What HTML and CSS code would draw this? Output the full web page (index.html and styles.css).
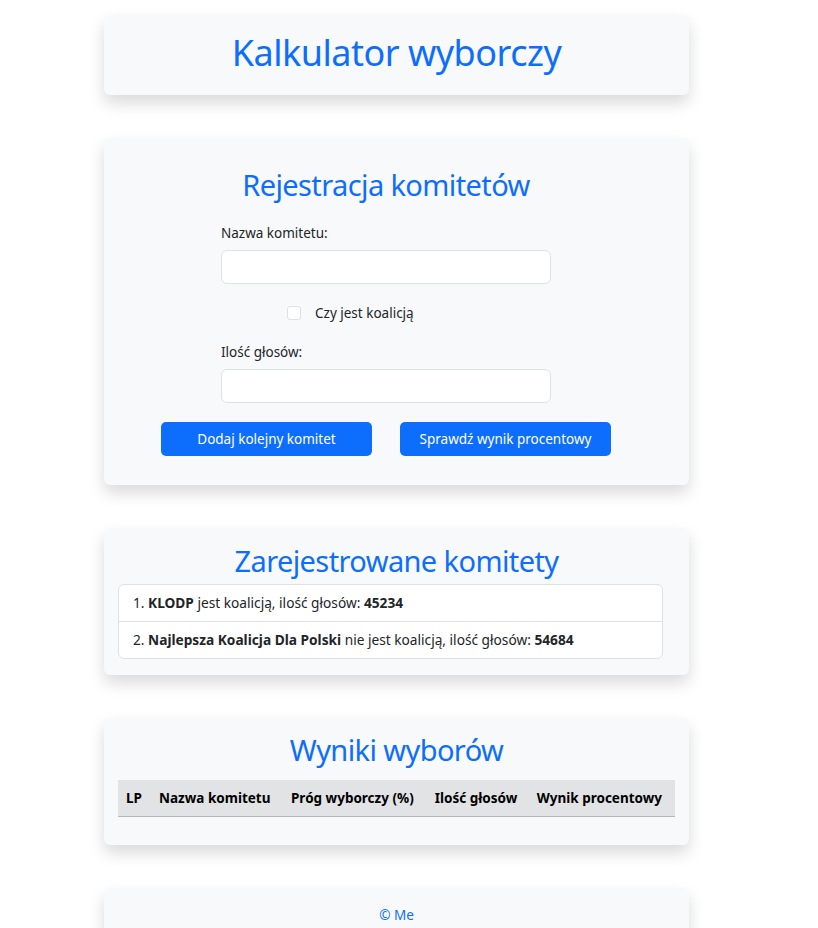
FILE: index.html
```html
<!DOCTYPE html>
<html lang="pl">
<head>
<meta charset="utf-8">
<title>Kalkulator wyborczy</title>
<link rel="stylesheet" href="styles.css">
</head>
<body>
<div class="page">
  <header class="card card-header">
    <h1 class="title-xl">Kalkulator wyborczy</h1>
  </header>

  <section class="card card-form">
    <h2 class="title">Rejestracja komitetów</h2>
    <div class="form">
      <label class="label" for="nazwa">Nazwa komitetu:</label>
      <input class="input" id="nazwa" type="text">
      <div class="check-row">
        <span class="checkbox"></span>
        <span class="check-label">Czy jest koalicją</span>
      </div>
      <label class="label" for="glosy">Ilość głosów:</label>
      <input class="input" id="glosy" type="text">
    </div>
    <div class="buttons">
      <button class="btn">Dodaj kolejny komitet</button>
      <button class="btn">Sprawdź wynik procentowy</button>
    </div>
  </section>

  <section class="card card-list">
    <h2 class="title">Zarejestrowane komitety</h2>
    <ul class="list">
      <li class="list-item">1. <b>KLODP</b> jest koalicją, ilość głosów: <b>45234</b></li>
      <li class="list-item">2. <b>Najlepsza Koalicja Dla Polski</b> nie jest koalicją, ilość głosów: <b>54684</b></li>
    </ul>
  </section>

  <section class="card card-results">
    <h2 class="title">Wyniki wyborów</h2>
    <table class="table">
      <thead>
        <tr>
          <th>LP</th>
          <th>Nazwa komitetu</th>
          <th>Próg wyborczy (%)</th>
          <th>Ilość głosów</th>
          <th>Wynik procentowy</th>
        </tr>
      </thead>
      <tbody></tbody>
    </table>
  </section>

  <footer class="card card-footer">
    <span class="copy">© Me</span>
  </footer>
</div>
</body>
</html>
```

FILE: styles.css
```css
html, body {
  margin: 0;
  padding: 0;
  background: #fff;
}
body {
  font-family: "Noto Sans", "Open Sans", sans-serif;
  color: #212529;
  font-size: 14px;
}
.page {
  width: 585px;
  margin-left: 104px;
  padding-top: 15px;
  display: flex;
  flex-direction: column;
  gap: 43px;
}
.card {
  background: #f8f9fa;
  border-radius: 6px;
  box-shadow: 0 8px 16px rgba(0,0,0,0.15);
  padding: 0 14px;
  box-sizing: border-box;
}
.card-header {
  height: 80px;
  padding-bottom: 4px;
  display: flex;
  align-items: center;
  justify-content: center;
}
.title-xl {
  margin: 0;
  font-weight: 400;
  font-size: 36px;
  color: #0d6efd;
  letter-spacing: -0.5px;
  line-height: 1.2;
}
.title {
  margin: 0;
  font-weight: 400;
  font-size: 29px;
  color: #0d6efd;
  text-align: center;
  line-height: 1.2;
  letter-spacing: -0.6px;
}
.card-form {
  height: 347px;
  padding: 30px 35px 0 14px;
}
.form {
  width: 330px;
  margin: 20px auto 0;
  display: flex;
  flex-direction: column;
}
.label {
  font-size: 13.5px;
  line-height: 20px;
  margin-bottom: 7px;
}
.input {
  height: 34px;
  box-sizing: border-box;
  border: 1px solid #dee2e6;
  border-radius: 6px;
  background: #fff;
  margin: 0;
  padding: 0 10px;
  font: inherit;
}
.check-row {
  display: flex;
  align-items: center;
  gap: 14px;
  margin: 14px 0 14px 66px;
  height: 30px;
}
.checkbox {
  width: 14px;
  height: 14px;
  border: 1px solid #dee2e6;
  border-radius: 3px;
  background: #fff;
  box-sizing: border-box;
}
.check-label {
  font-size: 13.5px;
}
.buttons {
  display: flex;
  justify-content: center;
  gap: 28px;
  margin-top: 19px;
}
.btn {
  width: 211px;
  height: 34px;
  border: none;
  border-radius: 5px;
  background: #0d6efd;
  color: #fff;
  font-family: inherit;
  font-size: 13.5px;
  padding: 0;
}
.card-list {
  height: 147px;
  padding-top: 16px;
}
.list {
  list-style: none;
  margin: 5px 12px 0 0;
  padding: 0;
  border: 1px solid #dee2e6;
  border-radius: 6px;
  background: #fff;
}
.list-item {
  height: 36px;
  display: flex;
  align-items: center;
  padding-left: 14px;
  font-size: 13.7px;
  white-space: pre;
}
.list-item b { font-weight: 700; }
.list-item + .list-item {
  border-top: 1px solid #dee2e6;
}
.card-results {
  height: 127px;
  padding-top: 15px;
}
.table {
  width: 557px;
  margin-top: 12px;
  border-collapse: collapse;
}
.table th {
  background: #e2e3e5;
  font-size: 13.5px;
  font-weight: 700;
  color: #000;
  height: 36px;
  padding: 0 8px;
  text-align: left;
  border-bottom: 1px solid #b5b6b7;
  white-space: nowrap;
}
.card-footer {
  height: 60px;
  display: flex;
  justify-content: center;
  padding-top: 17px;
  border-radius: 6px 6px 0 0;
}
.copy {
  color: #0d6efd;
  font-size: 13.5px;
  line-height: 20px;
}
```
